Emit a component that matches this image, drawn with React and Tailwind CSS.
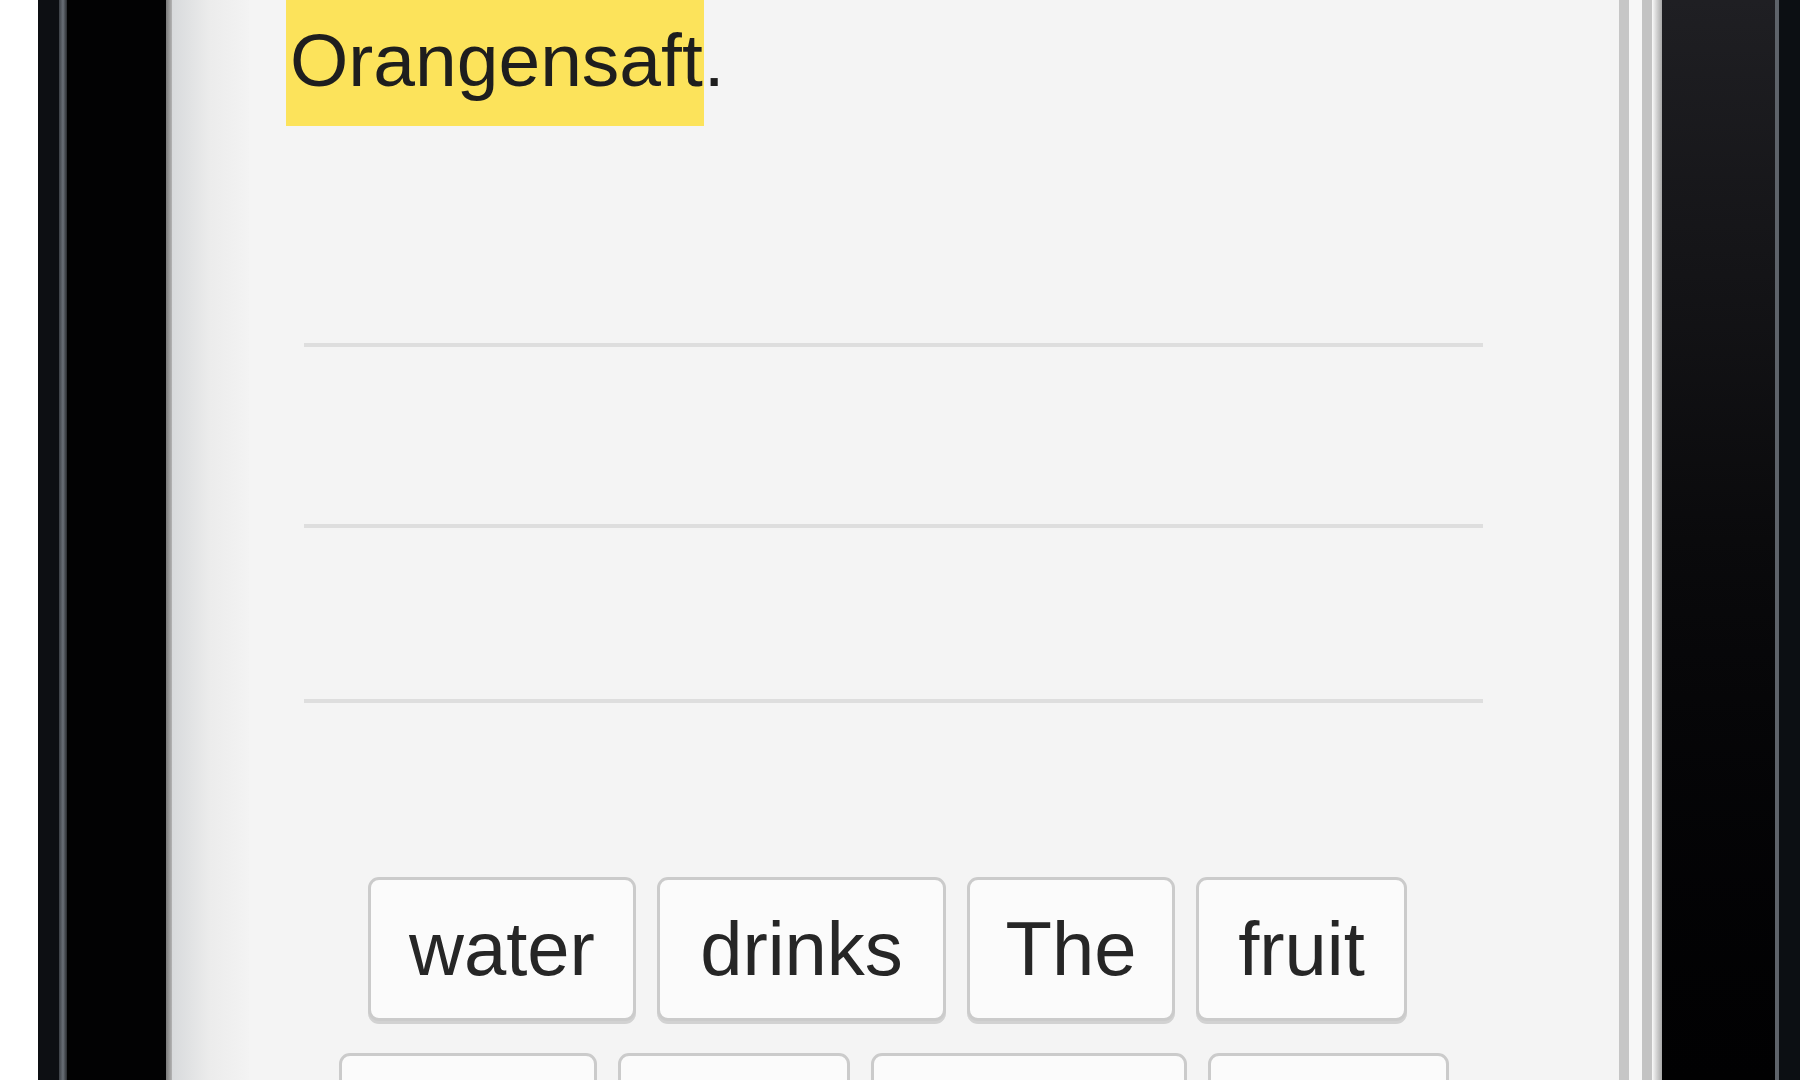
const font = { fontFamily: '"Liberation Sans", Arial, sans-serif' };

const topRow = [
  { word: 'water', w: 'w-[268px]' },
  { word: 'drinks', w: 'w-[289px]' },
  { word: 'The', w: 'w-[208px]' },
  { word: 'fruit', w: 'w-[211px]' },
];

const bottomRow = [
  { word: 'juice', w: 'w-[258px]' },
  { word: 'made', w: 'w-[232px]' },
  { word: 'vegetable', w: 'w-[316px]' },
  { word: 'from', w: 'w-[241px]' },
];

function WordTile({ word, w }) {
  return (
    <button
      type="button"
      className={`${w} h-[144px] shrink-0 flex items-center justify-center rounded-[11px] border-[3px] border-[#cbcbcb] bg-[#fbfbfb] shadow-[0_3px_0_#d2d2d2] text-[76px] leading-none text-[#262626]`}
    >
      {word}
    </button>
  );
}

export default function App() {
  return (
    <div className="w-[1800px] h-[1080px] overflow-hidden flex bg-white" style={font}>
      {/* left margin + bezel */}
      <div className="w-[38px] shrink-0 bg-white" />
      <div className="w-[128px] shrink-0 flex bg-black">
        <div className="w-[21px] bg-[#0d0f13]" />
        <div className="w-[8px] bg-gradient-to-r from-[#3c4046] via-[#6a7078] to-[#2a2d31]" />
        <div className="flex-1 bg-[#020203]" />
      </div>
      <div className="w-[6px] shrink-0 bg-gradient-to-r from-[#7a7a7a] to-[#b4b4b4]" />

      {/* screen */}
      <div className="w-[1447px] shrink-0 flex bg-[#f4f4f4]">
        <div className="w-[77px] shrink-0 bg-gradient-to-r from-[#d8dadc] via-[#ececec] to-[#f3f3f3]" />

        <div className="flex-1 flex flex-col">
          <div className="pl-[37px] text-[75px] leading-none text-[#1e1e1e]">
            <span className="inline-block h-[126px] pt-[23px] pl-[4px] pr-[1px] bg-[#fce35b]">Orangensaft</span>
            <span>.</span>
          </div>

          {/* answer lines */}
          <div className="ml-[55px] w-[1179px] flex flex-col">
            <div className="mt-[217px] h-[4px] bg-[#dedede]" />
            <div className="mt-[177px] h-[4px] bg-[#dedede]" />
            <div className="mt-[171px] h-[4px] bg-[#dedede]" />
          </div>

          {/* word bank */}
          <div className="ml-[49px] w-[1179px] flex flex-col">
            <div className="mt-[174px] flex justify-center gap-[21px]">
              {topRow.map((t) => (
                <WordTile key={t.word} {...t} />
              ))}
            </div>
            <div className="mt-[32px] pl-[12px] flex justify-center gap-[21px]">
              {bottomRow.map((t) => (
                <WordTile key={t.word} {...t} />
              ))}
            </div>
          </div>
        </div>
      </div>

      {/* right frame */}
      <div className="w-[10px] shrink-0 bg-[#c6c6c6]" />
      <div className="w-[13px] shrink-0 bg-[#f7f7f7]" />
      <div className="w-[10px] shrink-0 bg-[#c3c3c3]" />
      <div className="w-[10px] shrink-0 bg-gradient-to-r from-[#fafafa] to-[#a8a8a8]" />
      <div className="w-[113px] shrink-0 bg-gradient-to-b from-[#1f1f23] via-[#0a0a0c] to-[#010102]" />
      <div className="w-[4px] shrink-0 bg-[#5e636a]" />
      <div className="flex-1 bg-[#0c0f13]" />
    </div>
  );
}
